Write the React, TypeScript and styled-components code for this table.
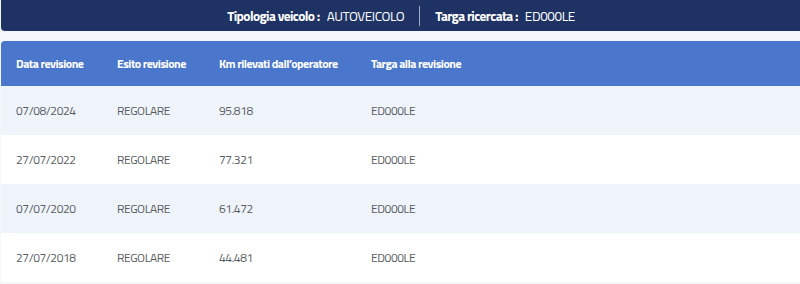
import React from 'react';
import styled, { createGlobalStyle } from 'styled-components';

const GlobalStyle = createGlobalStyle`
  html, body {
    margin: 0;
    padding: 0;
    background: #f3f6fb;
    overflow: hidden;
  }
  body {
    font-family: 'Titillium Web', Lato, 'Liberation Sans', sans-serif;
  }
`;

const Page = styled.div`
  width: 800px;
  height: 284px;
  overflow: hidden;
`;

const SearchBar = styled.div`
  height: 31px;
  margin-left: 1px;
  width: 800px;
  background: #1e3263;
  border-radius: 0 0 0 4px;
  display: flex;
  align-items: center;
  justify-content: center;
  color: #ffffff;
  font-size: 13.5px;
`;

const Info = styled.div`
  display: flex;
  align-items: center;
  gap: 7px;
  padding: 0 15px;
  height: 20px;

  & + & {
    border-left: 1px solid rgba(255, 255, 255, 0.6);
  }
`;

const Label = styled.span`
  font-weight: 700;
  letter-spacing: -0.6px;
`;

const Value = styled.span`
  font-weight: 400;
  letter-spacing: -0.4px;
`;

const Table = styled.div`
  margin: 10px 0 0 1px;
  width: 820px;
`;

const Row = styled.div<{ $head?: boolean; $alt?: boolean }>`
  display: grid;
  grid-template-columns: 101px 102px 152px 1fr;
  align-items: center;
  padding-left: 15px;
  height: ${p => (p.$head ? 45 : 49)}px;
  background: ${p => (p.$head ? '#4a77cc' : p.$alt ? '#eff4fb' : '#ffffff')};
  border-radius: ${p => (p.$head ? '4px 4px 0 0' : '0')};
  color: ${p => (p.$head ? '#ffffff' : '#585c62')};
  font-size: 12px;
  font-weight: ${p => (p.$head ? 700 : 400)};
  letter-spacing: ${p => (p.$head ? '-0.5px' : '-0.4px')};
`;

const Cell = styled.div`
  white-space: nowrap;
`;

const rows = [
  ['07/08/2024', 'REGOLARE', '95.818', 'ED000LE'],
  ['27/07/2022', 'REGOLARE', '77.321', 'ED000LE'],
  ['07/07/2020', 'REGOLARE', '61.472', 'ED000LE'],
  ['27/07/2018', 'REGOLARE', '44.481', 'ED000LE'],
];

const App = () => (
  <Page>
    <GlobalStyle />
    <SearchBar>
      <Info>
        <Label>Tipologia veicolo :</Label>
        <Value>AUTOVEICOLO</Value>
      </Info>
      <Info>
        <Label>Targa ricercata :</Label>
        <Value>ED000LE</Value>
      </Info>
    </SearchBar>
    <Table>
      <Row $head>
        <Cell>Data revisione</Cell>
        <Cell>Esito revisione</Cell>
        <Cell>Km rilevati dall’operatore</Cell>
        <Cell>Targa alla revisione</Cell>
      </Row>
      {rows.map((r, i) => (
        <Row key={i} $alt={i % 2 === 0}>
          {r.map((c, j) => (
            <Cell key={j}>{c}</Cell>
          ))}
        </Row>
      ))}
    </Table>
  </Page>
);

export default App;
